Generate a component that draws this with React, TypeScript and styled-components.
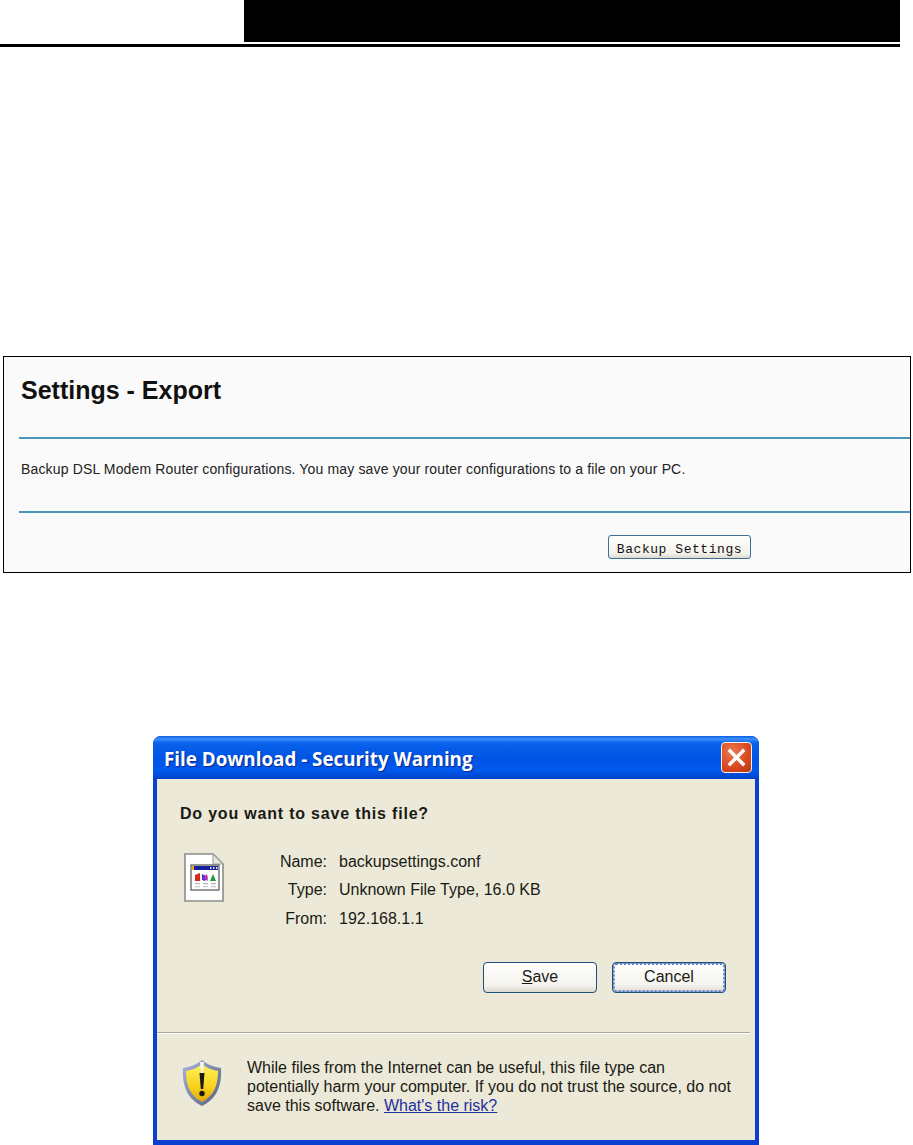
import React from "react";
import styled, { createGlobalStyle } from "styled-components";

const GlobalStyle = createGlobalStyle`
  html, body {
    margin: 0;
    padding: 0;
    background: #fff;
  }
  #root {
    width: 913px;
    height: 1145px;
    overflow: hidden;
  }
`;

const Page = styled.div`
  display: flex;
  flex-direction: column;
  width: 913px;
  height: 1145px;
  overflow: hidden;
  background: #fff;
`;

const TopBlock = styled.div`
  width: 656px;
  height: 42px;
  margin-left: 244px;
  background: #000;
`;

const TopRule = styled.div`
  width: 900px;
  height: 3px;
  margin-top: 2px;
  background: #000;
`;

const Panel = styled.section`
  box-sizing: border-box;
  display: flex;
  flex-direction: column;
  width: 908px;
  height: 217px;
  margin: 309px 0 0 3px;
  padding-left: 15px;
  border: 1px solid #000;
  background: #fafafa;
  font-family: "Liberation Sans", Arial, sans-serif;
  color: #111;
`;

const PanelTitle = styled.h1`
  height: 80px;
  margin: 0;
  padding: 19px 0 0 2px;
  box-sizing: border-box;
  font-size: 25px;
  line-height: 28px;
  font-weight: 700;
`;

const BlueRule = styled.div`
  height: 2px;
  background: #4a94b8;
`;

const PanelText = styled.p`
  height: 72px;
  margin: 0;
  padding: 23px 0 0 2px;
  box-sizing: border-box;
  font-size: 14px;
  line-height: 14px;
  letter-spacing: 0.15px;
  color: #222;
`;

const PanelActions = styled.div`
  display: flex;
  padding: 22px 0 0 589px;
`;

const BackupButton = styled.button`
  box-sizing: border-box;
  width: 143px;
  height: 24px;
  padding: 6px 0 0;
  border: 1px solid #3f6f96;
  border-radius: 3px;
  background: linear-gradient(#ffffff, #f2f1ea 80%, #dcd9cc);
  font-family: "Liberation Mono", monospace;
  font-size: 13px;
  letter-spacing: 0.55px;
  color: #111;
`;

const Dialog = styled.section`
  box-sizing: border-box;
  display: flex;
  flex-direction: column;
  width: 606px;
  height: 410px;
  margin: 163px 0 0 153px;
  border-radius: 8px 8px 0 0;
  background: #0a3fd0;
  font-family: "Liberation Sans", Tahoma, sans-serif;
  color: #1a1a14;
  overflow: hidden;
`;

const TitleBar = styled.header`
  box-sizing: border-box;
  flex: none;
  display: flex;
  align-items: center;
  justify-content: space-between;
  height: 43px;
  padding: 0 7px 0 11px;
  background: linear-gradient(
    #0a5de0 0%,
    #3f8ffa 7%,
    #0a62ec 16%,
    #0054e3 50%,
    #0058ee 80%,
    #0041c8 100%
  );
`;

const TitleText = styled.span`
  padding-top: 4px;
  font-family: "Open Sans", sans-serif;
  font-size: 18.8px;
  font-weight: 700;
  color: #fff;
  text-shadow: 1px 1px 1px #0a2a90;
`;

const CloseButton = styled.span`
  box-sizing: border-box;
  display: flex;
  align-items: center;
  justify-content: center;
  width: 31px;
  height: 31px;
  border: 1px solid #f4efe8;
  border-radius: 4px;
  background: radial-gradient(circle at 35% 30%, #ea7a50, #d9481f 60%, #b8320f);
`;

const DialogBody = styled.div`
  flex: 1;
  display: flex;
  flex-direction: column;
  min-height: 0;
  margin: 0 4px 5px;
  background: #ece9d8;
`;

const Question = styled.h2`
  height: 35px;
  margin: 0;
  padding: 25px 0 0 23px;
  box-sizing: content-box;
  font-size: 16px;
  line-height: 20px;
  font-weight: 700;
  letter-spacing: 0.8px;
`;

const FileRow = styled.div`
  display: flex;
  height: 109px;
  padding: 14px 0 0 27px;
  box-sizing: content-box;
`;

const Details = styled.dl`
  display: grid;
  grid-template-columns: 87px auto;
  grid-auto-rows: 28.5px;
  column-gap: 12px;
  align-content: start;
  margin: -5px 0 0 16px;
  font-size: 16px;
  line-height: 28.5px;
`;

const DetailLabel = styled.dt`
  text-align: right;
`;

const DetailValue = styled.dd`
  margin: 0;
`;

const ButtonRow = styled.div`
  display: flex;
  gap: 15px;
  padding-left: 326px;
`;

const DialogButton = styled.button<{ $focused?: boolean }>`
  box-sizing: border-box;
  width: 114px;
  height: 31px;
  padding: 0;
  border: 1px solid #1f4f7c;
  border-radius: 4px;
  background: linear-gradient(#ffffff, #f4f3ee 75%, #dedbd0);
  font-family: "Liberation Sans", Tahoma, sans-serif;
  font-size: 16px;
  color: #1a1a14;
  outline: ${(p) => (p.$focused ? "2px dotted #6a82c8" : "none")};
  outline-offset: ${(p) => (p.$focused ? "-3px" : "0")};
  box-shadow: ${(p) => (p.$focused ? "inset 0 0 0 1px #8fb0dc" : "none")};
`;

const Divider = styled.div`
  flex: none;
  height: 2px;
  margin: 39px 5px 0 0;
  background: linear-gradient(#aca899 50%, #fff 50%);
`;

const WarningRow = styled.div`
  display: flex;
  padding: 25px 0 0 25px;
`;

const WarningText = styled.p`
  width: 490px;
  margin: -1px 0 0 25px;
  font-size: 16px;
  line-height: 19px;
`;

const RiskLink = styled.a`
  color: #1f2f9c;
  text-decoration: underline;
`;

const CloseIcon = () => (
  <svg width="19" height="19" viewBox="0 0 19 19">
    <path d="M3 3 L16 16 M16 3 L3 16" stroke="#fff" strokeWidth="3.4" strokeLinecap="square" fill="none" />
  </svg>
);

const FileIcon = () => (
  <svg width="40" height="49" viewBox="0 0 40 49" style={{ flex: "none" }}>
    <path d="M1 1 H29 L39 11 V48 H1 Z" fill="#fff" stroke="#8c8c88" strokeWidth="1.6" />
    <path d="M29 1 V11 H39 Z" fill="#e8e8e2" stroke="#a4a49e" strokeWidth="1.2" />
    <rect x="7" y="12" width="28" height="25" fill="#fdfdfb" stroke="#55554f" strokeWidth="1.2" />
    <rect x="8" y="13" width="26" height="4" fill="#16209a" />
    <rect x="8" y="13" width="2" height="4" fill="#e8a820" />
    <rect x="26" y="14" width="1.5" height="2" fill="#ddd" />
    <rect x="29" y="14" width="1.5" height="2" fill="#ddd" />
    <rect x="32" y="14" width="1.5" height="2" fill="#ddd" />
    <path d="M11 22 L16 20 L16 28 L11 28 Z" fill="#d8281c" />
    <path d="M18 21 L24 24 L21 28 L18 27 Z" fill="#4a30d0" />
    <path d="M19 25 L23 21 L24 28 Z" fill="#c42cb0" />
    <path d="M26 28 L29 21 L32 28 Z" fill="#1c9a3a" />
    <rect x="11" y="30" width="5" height="1.2" fill="#b4b4b4" />
    <rect x="19" y="30" width="5" height="1.2" fill="#b4b4b4" />
    <rect x="27" y="30" width="5" height="1.2" fill="#b4b4b4" />
    <rect x="11" y="33" width="5" height="1.2" fill="#c8c8c8" />
    <rect x="19" y="33" width="5" height="1.2" fill="#c8c8c8" />
    <rect x="27" y="33" width="5" height="1.2" fill="#c8c8c8" />
  </svg>
);

const ShieldIcon = () => (
  <svg width="40" height="48" viewBox="0 0 40 48" style={{ flex: "none" }}>
    <defs>
      <linearGradient id="shieldFill" x1="0" y1="0" x2="0" y2="1">
        <stop offset="0" stopColor="#fff25a" />
        <stop offset="0.6" stopColor="#f7d21c" />
        <stop offset="1" stopColor="#e2a80c" />
      </linearGradient>
      <linearGradient id="shieldRim" x1="0" y1="0" x2="1" y2="1">
        <stop offset="0" stopColor="#aab4e0" />
        <stop offset="1" stopColor="#56607c" />
      </linearGradient>
    </defs>
    <path
      d="M20 1 C26 6 32 8 39 9 C40 26 35 40 20 47 C5 40 0 26 1 9 C8 8 14 6 20 1 Z"
      fill="url(#shieldRim)"
    />
    <path
      d="M20 5 C25 9 30 11 36 12 C36 26 32 37 20 43 C8 37 4 26 4 12 C10 11 15 9 20 5 Z"
      fill="url(#shieldFill)"
    />
    <path d="M18 3 L22 3 L21 14 L19 14 Z" fill="#f4f4f0" />
    <path d="M17.5 14 H22.5 L21.2 30 H18.8 Z" fill="#1a1a10" />
    <circle cx="20" cy="34.5" r="2.7" fill="#1a1a10" />
  </svg>
);

export default function App() {
  return (
    <Page>
      <GlobalStyle />
      <TopBlock />
      <TopRule />

      <Panel>
        <PanelTitle>Settings - Export</PanelTitle>
        <BlueRule />
        <PanelText>
          Backup DSL Modem Router configurations. You may save your router configurations to a file on your PC.
        </PanelText>
        <BlueRule />
        <PanelActions>
          <BackupButton>Backup Settings</BackupButton>
        </PanelActions>
      </Panel>

      <Dialog>
        <TitleBar>
          <TitleText>File Download - Security Warning</TitleText>
          <CloseButton>
            <CloseIcon />
          </CloseButton>
        </TitleBar>
        <DialogBody>
          <Question>Do you want to save this file?</Question>
          <FileRow>
            <FileIcon />
            <Details>
              <DetailLabel>Name:</DetailLabel>
              <DetailValue>backupsettings.conf</DetailValue>
              <DetailLabel>Type:</DetailLabel>
              <DetailValue>Unknown File Type, 16.0 KB</DetailValue>
              <DetailLabel>From:</DetailLabel>
              <DetailValue>192.168.1.1</DetailValue>
            </Details>
          </FileRow>
          <ButtonRow>
            <DialogButton>
              <u>S</u>ave
            </DialogButton>
            <DialogButton $focused>Cancel</DialogButton>
          </ButtonRow>
          <Divider />
          <WarningRow>
            <ShieldIcon />
            <WarningText>
              While files from the Internet can be useful, this file type can potentially harm your computer. If you do
              not trust the source, do not save this software. <RiskLink href="#">What's the risk?</RiskLink>
            </WarningText>
          </WarningRow>
        </DialogBody>
      </Dialog>
    </Page>
  );
}
